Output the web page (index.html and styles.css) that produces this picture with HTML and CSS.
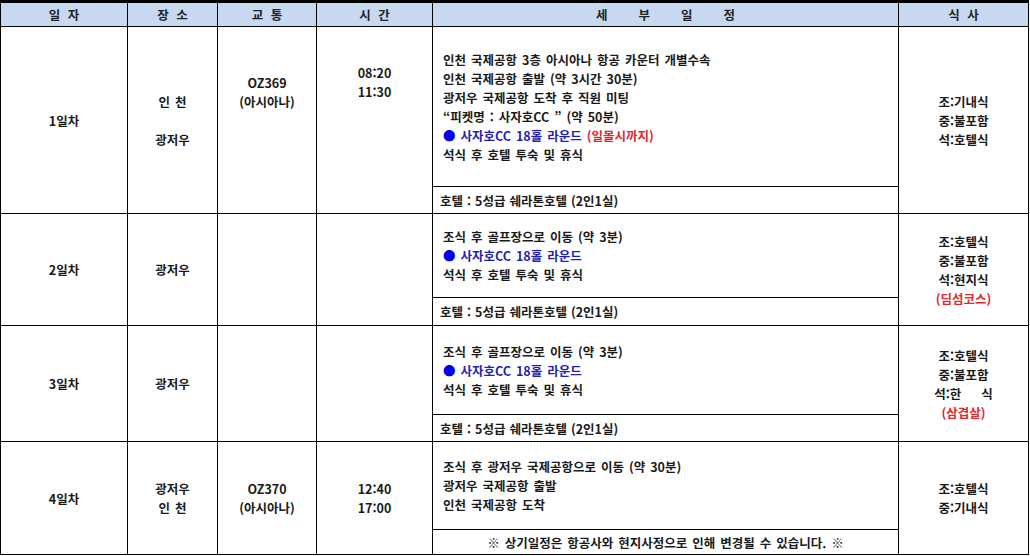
FILE: index.html
```html
<!DOCTYPE html>
<html lang="ko">
<head>
<meta charset="utf-8">
<link rel="stylesheet" href="styles.css">
</head>
<body>
<table class="sched">
  <colgroup>
    <col class="c-day"><col class="c-place"><col class="c-trans"><col class="c-time"><col class="c-detail"><col class="c-meal">
  </colgroup>
  <thead>
    <tr class="hrow">
      <th class="first">일 자</th>
      <th>장 소</th>
      <th>교 통</th>
      <th>시 간</th>
      <th><span class="spread"><span>세</span><span>부</span><span>일</span><span>정</span></span></th>
      <th>식 사</th>
    </tr>
  </thead>
  <tbody>
    <tr class="r1a">
      <td class="first" rowspan="2">1일차</td>
      <td rowspan="2">인 천<br><br>광저우</td>
      <td rowspan="2" class="pad3">OZ369<br>(아시아나)</td>
      <td rowspan="2" class="pad4">08:20<br>11:30</td>
      <td class="detail">인천 국제공항 3층 아시아나 항공 카운터 개별수속<br>인천 국제공항 출발 (약 3시간 30분)<br>광저우 국제공항 도착 후 직원 미팅<br>“피켓명 : 사자호CC ” (약 50분)<br><span class="blue"><span class="dot">●</span> 사자호CC 18홀 라운드</span> <span class="red">(일몰시까지)</span><br>석식 후 호텔 투숙 및 휴식</td>
      <td rowspan="2">조:기내식<br>중:불포함<br>석:호텔식</td>
    </tr>
    <tr class="r1b">
      <td class="hotel">호텔 : 5성급 쉐라톤호텔 (2인1실)</td>
    </tr>
    <tr class="r2a">
      <td class="first" rowspan="2">2일차</td>
      <td rowspan="2">광저우</td>
      <td rowspan="2"></td>
      <td rowspan="2"></td>
      <td class="detail">조식 후 골프장으로 이동 (약 3분)<br><span class="blue"><span class="dot">●</span> 사자호CC 18홀 라운드</span><br>석식 후 호텔 투숙 및 휴식</td>
      <td rowspan="2">조:호텔식<br>중:불포함<br>석:현지식<br><span class="red">(딤섬코스)</span></td>
    </tr>
    <tr class="r2b">
      <td class="hotel">호텔 : 5성급 쉐라톤호텔 (2인1실)</td>
    </tr>
    <tr class="r3a">
      <td class="first" rowspan="2">3일차</td>
      <td rowspan="2">광저우</td>
      <td rowspan="2"></td>
      <td rowspan="2"></td>
      <td class="detail">조식 후 골프장으로 이동 (약 3분)<br><span class="blue"><span class="dot">●</span> 사자호CC 18홀 라운드</span><br>석식 후 호텔 투숙 및 휴식</td>
      <td rowspan="2">조:호텔식<br>중:불포함<br>석:한&nbsp;&nbsp;&nbsp;&nbsp;식<br><span class="red">(삼겹살)</span></td>
    </tr>
    <tr class="r3b">
      <td class="hotel">호텔 : 5성급 쉐라톤호텔 (2인1실)</td>
    </tr>
    <tr class="r4a">
      <td class="first" rowspan="2">4일차</td>
      <td rowspan="2">광저우<br>인 천</td>
      <td rowspan="2">OZ370<br>(아시아나)</td>
      <td rowspan="2">12:40<br>17:00</td>
      <td class="detail">조식 후 광저우 국제공항으로 이동 (약 30분)<br>광저우 국제공항 출발<br>인천 국제공항 도착</td>
      <td rowspan="2">조:호텔식<br>중:기내식</td>
    </tr>
    <tr class="r4b">
      <td class="note">※ 상기일정은 항공사와 현지사정으로 인해 변경될 수 있습니다. ※</td>
    </tr>
  </tbody>
</table>
</body>
</html>
```

FILE: styles.css
```css
html, body {
  margin: 0;
  padding: 0;
  background: #ffffff;
}

.sched {
  border-collapse: separate;
  border-spacing: 0;
  table-layout: fixed;
  width: 1029px;
  border-top: 3px solid #000;
  font-family: "Noto Sans CJK KR", "Noto Sans", sans-serif;
  font-size: 12.5px;
  font-weight: 700;
  color: #1a1a1a;
  line-height: 19px;
  word-spacing: 1.5px;
}

.c-day { width: 128px; }
.c-place { width: 90px; }
.c-trans { width: 99px; }
.c-time { width: 116px; }
.c-detail { width: 466px; }
.c-meal { width: 130px; }

.sched th,
.sched td {
  border-right: 1px solid #000;
  border-bottom: 1px solid #000;
  padding: 0;
  text-align: center;
  vertical-align: middle;
  box-sizing: border-box;
}

.sched .first {
  border-left: 1px solid #000;
}

.sched th {
  background: #c6d9f1;
  color: #222;
  font-weight: 700;
  word-spacing: 4px;
}

.spread {
  display: inline-flex;
  gap: 31px;
  word-spacing: 0;
}

.hrow { height: 24px; }
.r1a { height: 160px; }
.r1b { height: 27px; }
.r2a { height: 84px; }
.r2b { height: 28px; }
.r3a { height: 89px; }
.r3b { height: 27px; }
.r4a { height: 88px; }
.r4b { height: 25px; }

.pad3 { padding-bottom: 57px !important; }
.pad4 { padding-bottom: 76px !important; }

.sched td.detail {
  text-align: left;
  padding-left: 10px;
}

.sched td.hotel {
  text-align: left;
  padding-left: 7px;
  word-spacing: 0.5px;
}

.sched td.note {
  text-align: center;
}

.blue { color: #1f1fb0; }
.dot { color: #0000ee; }
.red { color: #dc2a2f; }
```
